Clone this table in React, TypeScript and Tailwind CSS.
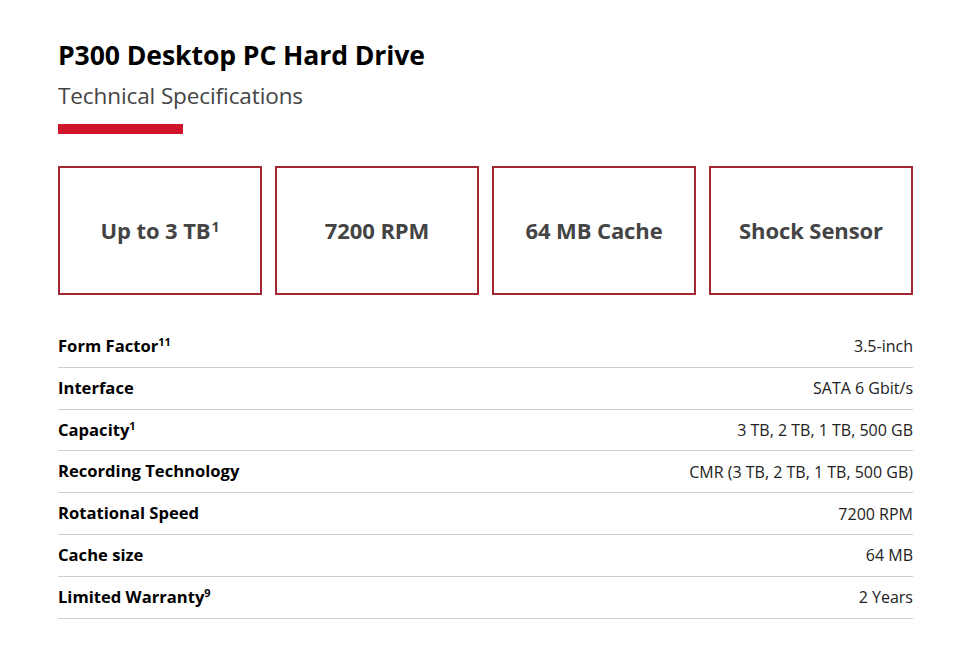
const highlights = [
  { label: 'Up to 3 TB', sup: '1' },
  { label: '7200 RPM' },
  { label: '64 MB Cache' },
  { label: 'Shock Sensor' },
];

const specs = [
  { name: 'Form Factor', sup: '11', value: '3.5-inch' },
  { name: 'Interface', value: 'SATA 6 Gbit/s' },
  { name: 'Capacity', sup: '1', value: '3 TB, 2 TB, 1 TB, 500 GB' },
  { name: 'Recording Technology', value: 'CMR (3 TB, 2 TB, 1 TB, 500 GB)' },
  { name: 'Rotational Speed', value: '7200 RPM' },
  { name: 'Cache size', value: '64 MB' },
  { name: 'Limited Warranty', sup: '9', value: '2 Years' },
];

export default function App() {
  return (
    <div
      className="h-[665px] w-full overflow-hidden bg-white pl-[58px] pr-[41px] pt-[37px] text-[#111]"
      style={{ fontFamily: '"Open Sans", "Noto Sans", sans-serif' }}
    >
      {/* Heading */}
      <h1 className="text-[26.6px] font-bold leading-[36px] tracking-[-0.1px] text-black">
        P300 Desktop PC Hard Drive
      </h1>
      <h2 className="mt-[8px] text-[22.5px] leading-[30px] tracking-[-0.1px] text-[#444]">
        Technical Specifications
      </h2>
      <div className="mt-[13px] h-[10px] w-[125px] bg-[#d0142a]" />

      {/* Highlight boxes */}
      <div className="mt-[32px] grid grid-cols-4 gap-[13px]">
        {highlights.map((h) => (
          <div
            key={h.label}
            className="flex h-[129px] items-center justify-center border-2 border-[#a52633] text-[22px] font-bold tracking-[-0.1px] text-[#444]"
          >
            <span>
              {h.label}
              {h.sup && <sup className="ml-[1px] text-[14px]">{h.sup}</sup>}
            </span>
          </div>
        ))}
      </div>

      {/* Spec table */}
      <div className="mt-[31px]">
        {specs.map((s) => (
          <div
            key={s.name}
            className="flex h-[41.8px] items-center justify-between border-b border-[#cfcfcf]"
          >
            <span className="text-[16.6px] font-bold text-black">
              {s.name}
              {s.sup && <sup className="text-[11px]">{s.sup}</sup>}
            </span>
            <span className="text-[16px] text-[#222]">{s.value}</span>
          </div>
        ))}
      </div>
    </div>
  );
}
